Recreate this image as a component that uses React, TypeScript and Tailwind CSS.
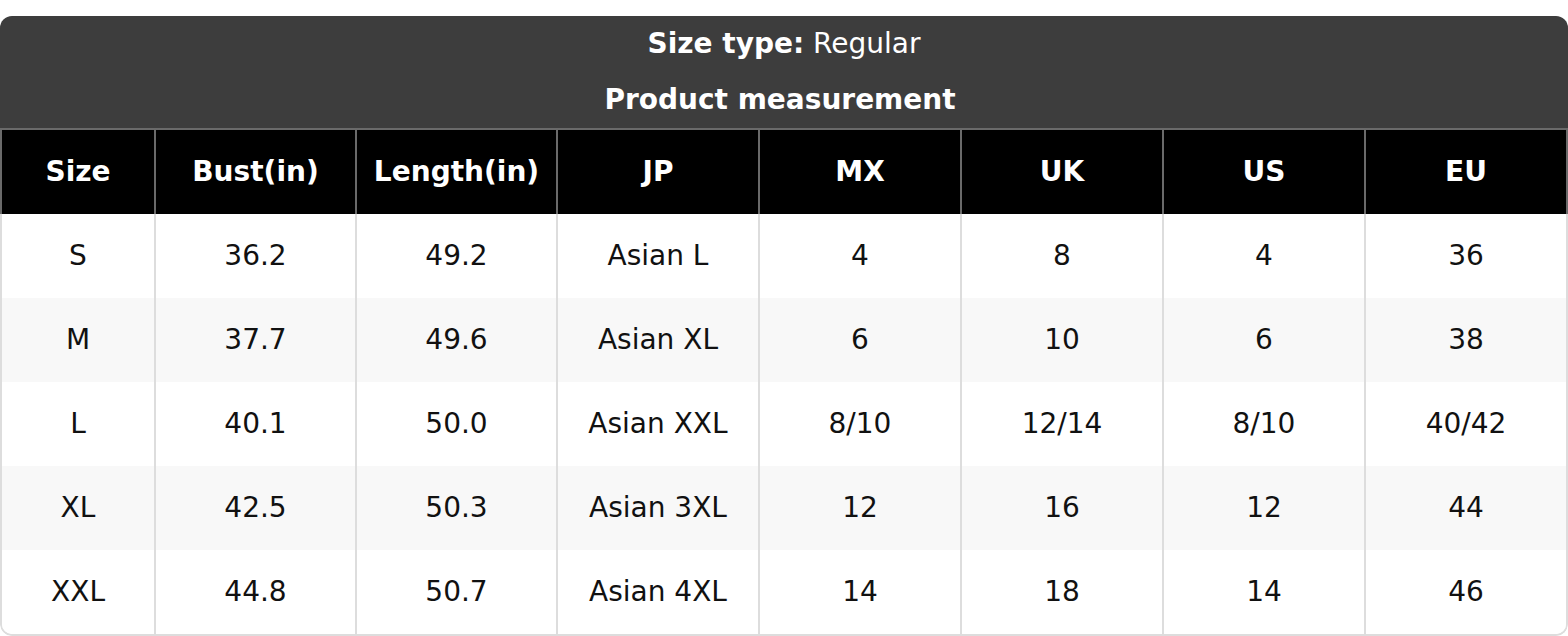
import * as React from 'react';

const headers = ['Size', 'Bust(in)', 'Length(in)', 'JP', 'MX', 'UK', 'US', 'EU'];

const rows = [
  ['S', '36.2', '49.2', 'Asian L', '4', '8', '4', '36'],
  ['M', '37.7', '49.6', 'Asian XL', '6', '10', '6', '38'],
  ['L', '40.1', '50.0', 'Asian XXL', '8/10', '12/14', '8/10', '40/42'],
  ['XL', '42.5', '50.3', 'Asian 3XL', '12', '16', '12', '44'],
  ['XXL', '44.8', '50.7', 'Asian 4XL', '14', '18', '14', '46'],
];

const SizeChart = () => {
  return (
    <div className="pt-4 bg-white" style={{ fontFamily: '"DejaVu Sans", sans-serif' }}>
      <div className="rounded-[12px] overflow-hidden text-[28px]">
        <div className="bg-[#3d3d3d] text-white">
          <div className="h-[56px] flex items-center justify-center">
            <span className="font-bold">Size type:</span>
            <span>&nbsp;Regular</span>
          </div>
          <div className="h-[56px] flex items-center justify-center font-bold pr-2">Product measurement</div>
        </div>

        <div className="grid grid-cols-[152px_201px_201px_202px_202px_202px_202px_1fr] bg-black border-x-2 border-t-2 border-[#6a6a6a]">
          {headers.map((h, i) => (
            <div
              key={h}
              className={`h-[84px] flex items-center justify-center font-bold text-white ${i > 0 ? 'border-l-2 border-[#6a6a6a]' : ''}`}
            >
              {h}
            </div>
          ))}
        </div>

        <div className="border-x-2 border-b-2 border-[#dddddd] rounded-b-[12px] overflow-hidden">
          {rows.map((r, ri) => (
            <div
              key={r[0]}
              className={`grid grid-cols-[152px_201px_201px_202px_202px_202px_202px_1fr] ${ri % 2 === 1 ? 'bg-[#f8f8f8]' : 'bg-white'}`}
            >
              {r.map((c, ci) => (
                <div
                  key={ci}
                  className={`h-[84px] flex items-center justify-center text-[#111111] ${ci > 0 ? 'border-l-2 border-[#dddddd]' : ''}`}
                >
                  {c}
                </div>
              ))}
            </div>
          ))}
        </div>
      </div>
    </div>
  );
};

export default function App() {
  return <SizeChart />;
}
